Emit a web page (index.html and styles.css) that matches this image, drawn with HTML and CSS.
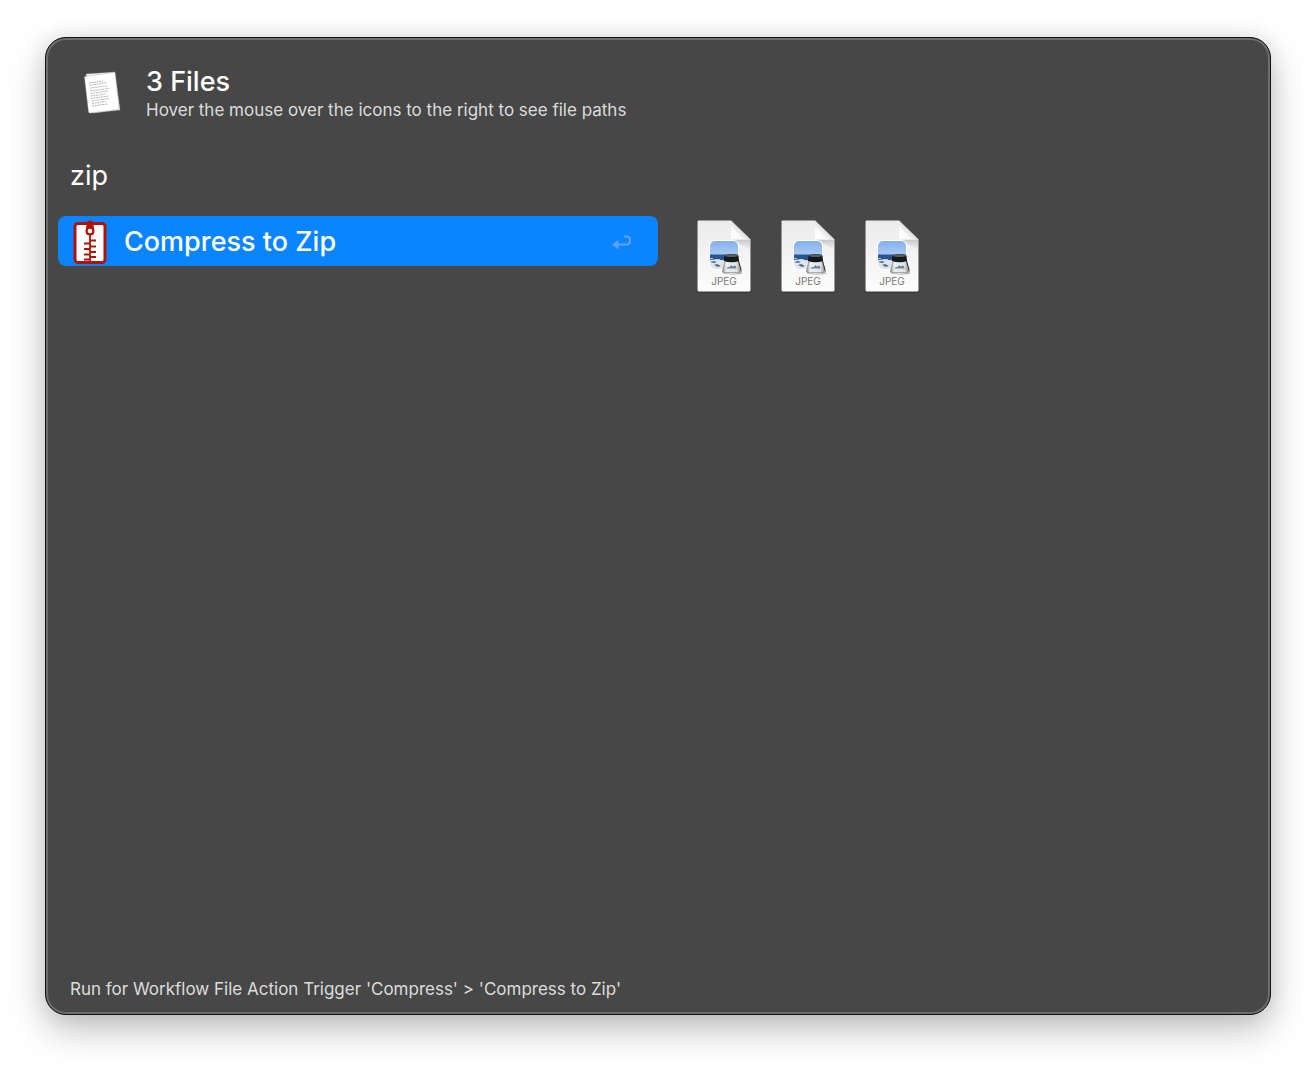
FILE: index.html
```html
<!DOCTYPE html>
<html lang="en">
<head>
<meta charset="utf-8">
<title>File Actions</title>
<link rel="stylesheet" href="styles.css">
</head>
<body>
<svg class="defs" width="0" height="0" aria-hidden="true">
  <defs>
    <linearGradient id="paper" x1="0" y1="0" x2="0" y2="1"><stop offset="0" stop-color="#ebebeb"/><stop offset="1" stop-color="#fcfcfc"/></linearGradient>
    <linearGradient id="fold" x1="0" y1="1" x2="1" y2="0"><stop offset="0" stop-color="#fff"/><stop offset=".3" stop-color="#fafafa"/><stop offset=".5" stop-color="#dedede"/></linearGradient>
    <linearGradient id="foldshade" x1="0" y1="0" x2="0" y2="1"><stop offset="0" stop-color="#888" stop-opacity=".4"/><stop offset="1" stop-color="#999" stop-opacity="0"/></linearGradient>
    <linearGradient id="sky" x1="0" y1="0" x2="0" y2="1"><stop offset="0" stop-color="#86afea"/><stop offset="1" stop-color="#a9cbf4"/></linearGradient>
    <linearGradient id="glass" x1="0" y1="0" x2="1" y2="0"><stop offset="0" stop-color="#8a8d90"/><stop offset=".2" stop-color="#eceef0"/><stop offset=".75" stop-color="#dfe2e4"/><stop offset="1" stop-color="#777"/></linearGradient>
    <clipPath id="photo"><rect x="14" y="21" width="28" height="28" rx="5"/></clipPath>
    <symbol id="jpeg" viewBox="0 0 56 74">
      <path d="M2 1H35L55 20V71Q55 73 53 73H3Q1 73 1 71V2Q1 1 2 1Z" fill="#222" opacity=".35"/>
      <path d="M2.500 .5H35L54.500 19.500V70Q54.500 71.500 53 71.500H3Q1.500 71.500 1.500 70V1.500Q1.500 .5 2.500 .5Z" fill="url(#paper)"/>
      <path d="M36 19.500H54.500V30Z" fill="url(#foldshade)"/>
      <path d="M35 .5L54.500 19.500H37Q35 19.500 35 17.500Z" fill="url(#fold)"/>
      <rect x="13" y="20" width="30" height="30" rx="6" fill="#fff"/>
      <g clip-path="url(#photo)">
        <path d="M14 21h28v14H14z" fill="url(#sky)"/>
        <path d="M14 34.500h28V40.500H14z" fill="#2a5592"/>
        <path d="M14 40q5-1 10 0t18 1v9H14z" fill="#dfe7ec"/>
        <path d="M14 42l4-1 3 1-3 1zM18 45l3-1 4 2-3 1z" fill="#4e6c88"/>
        <path d="M14 38.500h3M19 39.500h5" stroke="#cfe0f2" stroke-width=".8"/>
      </g>
      <path d="M27 52.500q8 2 18 0l2 1q-9 2-20 0z" fill="#777" opacity=".5"/>
      <path d="M29 41H42.500L45.500 51Q45.500 52.500 43.500 52.500H28Q26 52.500 26.500 51Z" fill="url(#glass)" stroke="#7b7e81" stroke-width=".6"/>
      <path d="M30.500 48.500q2-3 3-1 2-4 3-1l3-1 1 3z" fill="#6e8496"/>
      <path d="M42.500 41l2.500 9" stroke="#333"/>
      <path d="M28.500 35.500Q35.500 33 42.500 35.500L43 41Q36 43.500 28 41Z" fill="#151719"/>
      <ellipse cx="35.500" cy="35.700" rx="6.500" ry="1.400" fill="#5a5d5f"/>
      <text x="28" y="65" text-anchor="middle" class="file-kind">JPEG</text>
    </symbol>
  </defs>
</svg>

<main class="panel">
  <header class="subject">
    <svg class="subject-icon" viewBox="0 0 38 44" aria-hidden="true">
      <g stroke="#999" stroke-width=".4">
        <path d="M3 3L32 1 37 39 10 42Z" fill="#fafafa"/>
        <path d="M1.500 6.500Q1 5.500 2 5.500L30 1.500Q31.500 1 32 2.500L36 36Q36.500 38 35 38.500L7.500 42Q6 42.500 5.500 41Z" fill="#fff"/>
      </g>
      <path d="M6 12l14-2M6 14.500l18-3M7 17l17-2M7 20l19-2.500M7.500 22.500l18-2.500M8 25l15-2M8 27.500l18-2.500M8.500 30l18-2.500M9 32.500l14-2M9 35l16-2" stroke="#aaa" stroke-width=".8" stroke-dasharray="2.500 .5 1.500 .5"/>
    </svg>
    <div class="subject-text">
      <h1 class="title">3 Files</h1>
      <p class="note">Hover the mouse over the icons to the right to see file paths</p>
    </div>
  </header>

  <input class="query" type="text" value="zip" aria-label="Filter actions">

  <div class="content">
    <button class="action" type="button">
      <svg class="zip-icon" viewBox="0 0 34 46" aria-hidden="true">
        <rect x="2" y="4.500" width="30" height="39" rx="3" fill="#fff" stroke="#b01207" stroke-width="3"/>
        <path d="M17 15V44M17 21.500h6M11 24.500h6M17 27.500h6M11 30h6M17 33h6M11 35.500h6M17 38h6M11 40.500h6" fill="none" stroke="#b01207" stroke-width="1.800"/>
        <path d="M14 3.500Q14 1.500 17 1.500T20 3.500L21.500 12Q21.500 16.500 17 16.500T12.500 12Z" fill="#b01207"/>
        <circle cx="17" cy="12" r="2.300" fill="#fff"/>
      </svg>
      <span class="action-name">Compress to Zip</span>
      <svg class="return-icon" viewBox="0 0 20 16" aria-hidden="true">
        <path d="M12 2.500H14.500Q18 2.500 18 6.500T14.500 10.500H5" fill="none" stroke="#62a3fa" stroke-width="2"/>
        <path d="M0 10.500L6.500 6V15.500Z" fill="#62a3fa"/>
      </svg>
    </button>
    <ul class="files">
      <li><svg class="file" role="img" aria-label="JPEG file"><use href="#jpeg"/></svg></li>
      <li><svg class="file" role="img" aria-label="JPEG file"><use href="#jpeg"/></svg></li>
      <li><svg class="file" role="img" aria-label="JPEG file"><use href="#jpeg"/></svg></li>
    </ul>
  </div>

  <footer class="status">Run for Workflow File Action Trigger 'Compress' &gt; 'Compress to Zip'</footer>
</main>
</body>
</html>
```
FILE: styles.css
```css
* { box-sizing: border-box; }

body {
  margin: 0;
  min-height: 100vh;
  padding: 37px 45px 53px;
  display: flex;
  background: #fff;
  color: #fff;
  font-family: Inter, "Liberation Sans", sans-serif;
}

.defs { position: absolute; }

.panel {
  flex: 1;
  min-width: 0;
  display: flex;
  flex-direction: column;
  padding: 28px 12px 12px;
  border: 1px solid #111;
  border-radius: 21px;
  background: #474747;
  box-shadow: inset 0 0 0 2px #6e6e6e, 0 14px 36px rgba(0, 0, 0, .26), 0 0 20px rgba(0, 0, 0, .08);
}

.subject {
  display: flex;
  align-items: flex-start;
  gap: 24px;
  padding-left: 25px;
}

.subject-icon { width: 38px; height: 44px; margin-top: 5px; }

.subject-text { padding-left: 1px; }

.title {
  margin: 0;
  font-size: 27px;
  line-height: 32px;
  font-weight: 500;
}

.note {
  margin: 2px 0 0;
  font-size: 17px;
  line-height: 20px;
  font-weight: 400;
  color: #dcdcdc;
}

.query {
  margin: 34px 0 18px;
  padding: 0 12px;
  border: 0;
  outline: 0;
  background: transparent;
  color: #fff;
  font: 400 27px/44px Inter, "Liberation Sans", sans-serif;
  height: 44px;
}

.content {
  flex: 1;
  display: grid;
  grid-template-columns: 600px 1fr;
  gap: 38px;
  align-items: start;
}

.action {
  display: flex;
  align-items: center;
  height: 50px;
  padding: 2px 26px 0 15px;
  gap: 17px;
  border: 0;
  border-radius: 8px;
  background: #0a84ff;
  color: #fff;
  font: 500 27px/48px Inter, "Liberation Sans", sans-serif;
  text-align: left;
}

.zip-icon { width: 34px; height: 46px; }
.action-name { flex: 1; }
.return-icon { width: 20px; height: 16px; }

.files {
  display: flex;
  flex-wrap: wrap;
  gap: 28px;
  margin: 0;
  padding: 4px 0 0;
  list-style: none;
}

.file { display: block; width: 56px; height: 74px; }
.file-kind { font: 400 10px Inter, "Liberation Sans", sans-serif; fill: #777; }

.status {
  padding: 0 12px 1px;
  font-size: 17px;
  line-height: 24px;
  font-weight: 400;
  color: #dcdcdc;
}
```
